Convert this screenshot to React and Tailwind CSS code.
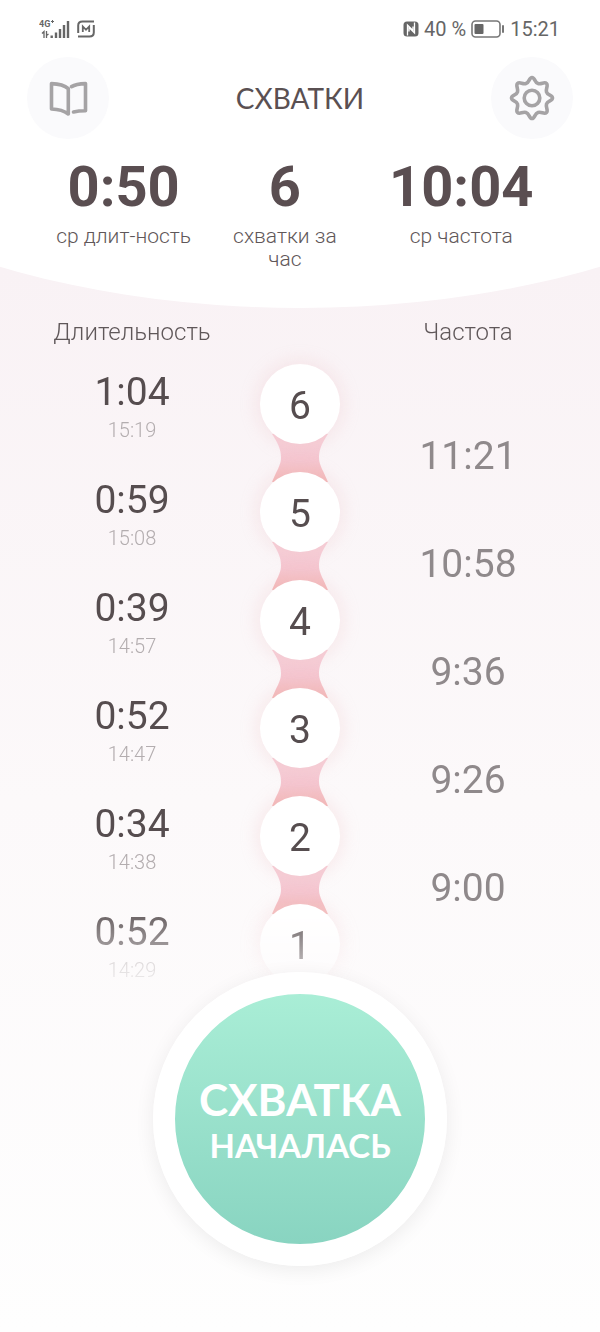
const contractions = [
  { id: 6, duration: "1:04", time: "15:19", frequency: "11:21" },
  { id: 5, duration: "0:59", time: "15:08", frequency: "10:58" },
  { id: 4, duration: "0:39", time: "14:57", frequency: "9:36" },
  { id: 3, duration: "0:52", time: "14:47", frequency: "9:26" },
  { id: 2, duration: "0:34", time: "14:38", frequency: "9:00" },
  { id: 1, duration: "0:52", time: "14:29", frequency: "" },
];

const stats = [
  { value: "0:50", label: "ср длит-ность" },
  { value: "6", label: "схватки за час" },
  { value: "10:04", label: "ср частота" },
];

const SignalIcon = () => (
  <svg className="w-8 h-6" viewBox="0 0 32 24" fill="#666" aria-hidden="true">
    <text x="0" y="10" fontSize="9" fontWeight="700" fontFamily="Roboto">
      4G
    </text>
    <path d="M12 4.5h3M13.500 3v3" stroke="#666" strokeWidth="1" />
    <path
      d="M3 16.500l2-2v6.500M7.500 14v7M7.500 18.500l2-1.500"
      stroke="#666"
      strokeWidth="1.300"
      fill="none"
    />
    <path d="M11.500 18.500h2.400v2.500h-2.400zM15.800 15.500h2.400v5.500h-2.400zM19.800 12h2.400v9h-2.400zM23.800 8h2.400v13h-2.400zM27.800 4h2.400v17h-2.400z" />
  </svg>
);

const OperatorIcon = () => (
  <svg className="size-[18px]" viewBox="0 0 18 18" fill="none" aria-hidden="true">
    <path
      d="M1.200 13V5.500Q1.200 1.500 5.500 1.500H17M16.800 5v7.500q0 4-4.300 4H1"
      stroke="#666"
      strokeWidth="2"
    />
    <path
      d="M5.800 12V6.400L9 9.800l3.200-3.400V12"
      stroke="#666"
      strokeWidth="1.800"
    />
  </svg>
);

const NfcIcon = () => (
  <svg className="size-4" viewBox="0 0 16 16" fill="none" aria-hidden="true">
    <rect x="0.500" y="0.500" width="15" height="15" rx="3.500" fill="#666" />
    <path
      d="M4.500 14.500V4L10 9.500V5.500M11.500 1.500V12L6 6.500v4"
      stroke="#fff"
      strokeWidth="1.300"
    />
  </svg>
);

const BatteryIcon = () => (
  <svg className="w-[34px] h-[18px]" viewBox="0 0 34 18" aria-hidden="true">
    <rect
      x="1"
      y="1"
      width="28"
      height="16"
      rx="3.500"
      fill="none"
      stroke="#777"
      strokeWidth="1.600"
    />
    <rect x="3.500" y="4" width="9" height="10" rx="1" fill="#666" />
    <rect x="31" y="5" width="2" height="8" rx="1" fill="#777" />
  </svg>
);

const BookIcon = () => (
  <svg
    className="w-10 h-10"
    viewBox="0 0 40 40"
    fill="none"
    stroke="#a5a3a5"
    strokeWidth="3.600"
    strokeLinecap="round"
    strokeLinejoin="round"
    aria-hidden="true"
  >
    <path d="M20.300 36q-6-4.600-16.800-5V5.600q11.500.4 16.800 5z" />
    <path d="M23.500 8.600Q28 5.900 37.500 5.600V32.800q-7 0-12 1.200" />
  </svg>
);

const GearIcon = () => (
  <svg
    className="w-12 h-12"
    viewBox="0 0 48 48"
    fill="none"
    stroke="#a5a3a5"
    strokeWidth="3.600"
    strokeLinejoin="round"
    aria-hidden="true"
  >
    <path d="M24 3.500C27 3.500 26.500 8.500 30 9.500C33.500 10.500 36.400 7.400 38.500 9.500C40.600 11.600 37.500 14.500 38.500 18C39.500 21.500 44.500 21 44.500 24C44.500 27 39.500 26.500 38.500 30C37.500 33.500 40.600 36.400 38.500 38.500C36.400 40.600 33.500 37.500 30 38.500C26.500 39.500 27 44.500 24 44.500C21 44.500 21.500 39.500 18 38.500C14.500 37.500 11.600 40.600 9.500 38.500C7.400 36.400 10.500 33.500 9.500 30C8.500 26.500 3.500 27 3.500 24C3.500 21 8.500 21.500 9.500 18C10.500 14.500 7.400 11.600 9.500 9.500C11.600 7.400 14.500 10.500 18 9.500C21.500 8.500 21 3.500 24 3.500Z" />
    <circle cx="24" cy="24" r="7.800" />
  </svg>
);

// pink neck that joins a circle with the next one
const Connector = () => (
  <svg
    className="absolute top-[70px] left-1/2 -translate-x-1/2 w-14 h-12"
    viewBox="0 0 56 48"
    aria-hidden="true"
  >
    <defs>
      <linearGradient id="neck" x1="0" y1="0" x2="0" y2="1">
        <stop offset="0.200" stopColor="#f6ced7" />
        <stop offset="0.550" stopColor="#f5c6d0" />
        <stop offset="0.950" stopColor="#f3b8b8" />
      </linearGradient>
    </defs>
    <path
      d="M0 0C8 12 9 18 9 24C9 31 4 38 0 48H56C52 38 47 31 47 24C47 18 48 12 56 0Z"
      fill="url(#neck)"
    />
  </svg>
);

const StatusBar = () => (
  <div className="flex items-center justify-between h-[57px] pl-[39px] pr-10 text-xl text-[#666]">
    <div className="flex items-center gap-1.5">
      <SignalIcon />
      <OperatorIcon />
    </div>
    <div className="flex items-center gap-[5px]">
      <NfcIcon />
      <span>40 %</span>
      <BatteryIcon />
      <span>15:21</span>
    </div>
  </div>
);

const Header = () => (
  <header className="bg-white pb-[37px] [clip-path:ellipse(100%_100%_at_50%_0)]">
    <StatusBar />
    <div className="flex items-center justify-between px-[27px]">
      <button
        aria-label="Справка"
        className="flex items-center justify-center size-[82px] rounded-full bg-[#fafafc]"
      >
        <BookIcon />
      </button>
      <h1 className="font-[Lato,sans-serif] text-[28px] text-[#5a5052]">СХВАТКИ</h1>
      <button
        aria-label="Настройки"
        className="flex items-center justify-center size-[82px] rounded-full bg-[#fafafc]"
      >
        <GearIcon />
      </button>
    </div>
    <dl className="grid grid-cols-[30%_34%_36%] px-12 pt-5 text-center">
      {stats.map((stat) => (
        <div key={stat.value} className="flex flex-col-reverse justify-end items-center gap-2.5">
          <dt className="max-w-[138px] text-[21px] leading-[23px] font-light text-[#5f5759]">
            {stat.label}
          </dt>
          <dd className="text-[56px] leading-[56px] font-bold text-[#5a4e51]">
            {stat.value}
          </dd>
        </div>
      ))}
    </dl>
  </header>
);

const ContractionRow = ({ item, last }) => (
  <tr className="h-[108px] align-top">
    <td className="pt-2 text-[39px] leading-10 text-[#564d4f]">
      {item.duration}
      <div className="text-xl leading-9 font-light text-[#b3adaf]">{item.time}</div>
    </td>
    <td>
      <div className="relative flex justify-center">
        {!last && <Connector />}
        <div className="relative flex items-center justify-center size-20 pt-1 rounded-full bg-white text-[39px] text-[#564d4f] shadow-[0_0_16px_4px_rgba(240,190,195,0.25)]">
          {item.id}
        </div>
      </div>
    </td>
    <td className="pt-[76px] text-[39px] leading-8 text-[#8f898b]">{item.frequency}</td>
  </tr>
);

const App = () => {
  return (
    <div className="flex flex-col min-h-screen bg-linear-to-b from-[#f9f2f5] from-20% via-[#fcf9fa] via-60% to-[#fefefe] font-[Roboto,sans-serif]">
      <Header />
      <main className="flex flex-col items-center px-12 pb-16">
        <table className="w-full table-fixed text-center [mask-image:linear-gradient(to_top,transparent_8px,black_110px)]">
          <thead>
            <tr className="h-14 text-2xl text-[#5f5759]">
              <th className="pb-2 font-light">Длительность</th>
              <th aria-label="Номер"></th>
              <th className="pb-2 font-light">Частота</th>
            </tr>
          </thead>
          <tbody>
            {contractions.map((item, i) => (
              <ContractionRow
                key={item.id}
                item={item}
                last={i === contractions.length - 1}
              />
            ))}
          </tbody>
        </table>
        <button className="relative -mt-10 flex flex-col items-center justify-center size-[294px] rounded-full border-[22px] border-white bg-linear-to-b from-[#acf0d8] to-[#86d2bf] bg-origin-border font-[Lato,sans-serif] font-bold text-white shadow-[0_4px_20px_rgba(0,0,0,0.07)]">
          <span className="text-[44px] leading-[52px]">СХВАТКА</span>
          <span className="text-[33px] leading-[40px]">НАЧАЛАСЬ</span>
        </button>
      </main>
    </div>
  );
};

export default App;
